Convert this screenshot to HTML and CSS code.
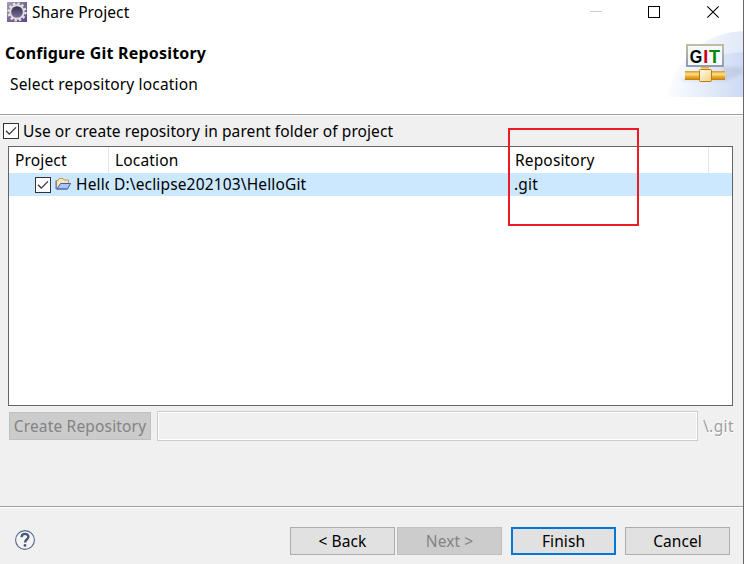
FILE: index.html
```html
<!DOCTYPE html>
<html lang="en">
<head>
<meta charset="utf-8">
<title>Share Project</title>
<link rel="stylesheet" href="styles.css">
</head>
<body>
<div class="window">
  <header class="header">
    <div class="titlebar">
      <svg class="app-icon" width="20" height="20" viewBox="0 0 20 20">
        <defs>
          <linearGradient id="tile" x1="0" y1="0" x2="1" y2="1"><stop offset="0" stop-color="#a9a0bd"/><stop offset=".5" stop-color="#75679a"/><stop offset="1" stop-color="#5d4787"/></linearGradient>
          <linearGradient id="core" x1="0" y1="0" x2="0" y2="1"><stop offset="0" stop-color="#302850"/><stop offset="1" stop-color="#82799c"/></linearGradient>
        </defs>
        <rect width="20" height="20" fill="url(#tile)"/>
        <circle cx="10" cy="10" r="8.5" fill="none" stroke="#e8e4dc" stroke-width="2.2" stroke-dasharray="2.4 2.05"/>
        <circle cx="10" cy="10" r="6.8" fill="url(#core)" stroke="#e4e0da" stroke-width="1.9"/>
      </svg>
      <span class="title">Share Project</span>
      <svg class="controls" width="130" height="24" viewBox="0 0 130 24" fill="none">
        <path d="M0 11.5H12" stroke="#ccc"/>
        <rect x="58.5" y="6.5" width="11" height="11" stroke="#000"/>
        <path d="M117.3 6.3L128.7 17.7M128.7 6.3L117.3 17.7" stroke="#000" stroke-width="1.1"/>
      </svg>
    </div>
    <div class="banner">
      <div class="banner-text">
        <h1>Configure Git Repository</h1>
        <p>Select repository location</p>
      </div>
      <svg class="git-logo" width="75" height="67" viewBox="0 0 75 67">
        <defs>
          <linearGradient id="glow" x1="0" y1=".5" x2="1" y2=".6"><stop offset="0" stop-color="#fafcff"/><stop offset=".55" stop-color="#eff3fc"/><stop offset="1" stop-color="#dfe8f8"/></linearGradient>
          <linearGradient id="frame" x1="0" y1="0" x2="0" y2="1"><stop offset="0" stop-color="#c2bda0"/><stop offset="1" stop-color="#929bb0"/></linearGradient>
          <linearGradient id="pipe" x1="0" y1="0" x2="0" y2="1"><stop offset="0" stop-color="#d99a22"/><stop offset=".35" stop-color="#ffe18a"/><stop offset=".6" stop-color="#eeb136"/><stop offset="1" stop-color="#c27c08"/></linearGradient>
          <linearGradient id="joint" x1="0" y1="0" x2="1" y2="1"><stop offset="0" stop-color="#fffdf2"/><stop offset="1" stop-color="#f3cf7a"/></linearGradient>
          <linearGradient id="shade"><stop offset="0" stop-color="#bcc3d3" stop-opacity=".3"/><stop offset="1" stop-color="#b5c0d8" stop-opacity=".6"/></linearGradient>
          <linearGradient id="inner"><stop offset="0" stop-color="#ccd9f3" stop-opacity="0"/><stop offset="1" stop-color="#c3d2f1" stop-opacity=".6"/></linearGradient>
          <filter id="soft"><feGaussianBlur stdDeviation="1.5"/></filter>
        </defs>
        <path d="M0 67C6 33 32 3 75 1V67Z" fill="url(#glow)"/>
        <path d="M16 41C26 30 50 24 75 22V67H8Z" fill="url(#inner)"/>
        <path d="M55 37H75V43L58 51H14V48H55Z" fill="url(#shade)" filter="url(#soft)"/>
        <rect x="19" y="15" width="36" height="21" fill="#f4fafb" stroke="url(#frame)" stroke-width="2"/>
        <g class="logo-text"><text x="21.8" y="32.5" textLength="12.5" lengthAdjust="spacingAndGlyphs" fill="#050505">G</text><text x="35.2" y="32.5" textLength="5" lengthAdjust="spacingAndGlyphs" fill="#c4001a">I</text><text x="41" y="32.5" textLength="11" lengthAdjust="spacingAndGlyphs" fill="#078607">T</text></g>
        <rect x="33" y="37" width="8" height="5" fill="url(#pipe)"/>
        <rect x="17" y="41" width="40" height="9" fill="url(#pipe)"/>
        <rect x="31.5" y="39.5" width="12" height="12" rx="1" fill="url(#joint)" stroke="#bd7b13"/>
      </svg>
    </div>
  </header>
  <main class="content">
    <label class="option">
      <svg class="check" width="16" height="16" viewBox="0 0 16 16"><rect x=".5" y=".5" width="15" height="15" fill="#fff" stroke="#333"/><path d="M3 7.8L6.3 11.1L13 4.4" fill="none" stroke="#333" stroke-width="1.3"/></svg>
      <span class="option-text">Use or create repository in parent folder of project</span>
    </label>
    <div class="table">
      <div class="row head">
        <div class="cell"><span class="t-project">Project</span></div>
        <div class="cell"><span class="t-location">Location</span></div>
        <div class="cell"><span class="t-repository">Repository</span></div>
      </div>
      <div class="row selected">
        <div class="cell name-cell">
          <svg class="check" width="16" height="16" viewBox="0 0 16 16"><rect x=".5" y=".5" width="15" height="15" fill="#fff" stroke="#333"/><path d="M3 7.8L6.3 11.1L13 4.4" fill="none" stroke="#333" stroke-width="1.3"/></svg>
          <svg class="folder" width="17" height="14" viewBox="0 0 17 14"><path d="M1.5 11.5V3.5H3L4 1.5H8L9 3H13.5V6" fill="#fbe6b4" stroke="#c59b58"/><path d="M2 12L5.5 6.5H15.5L12.5 12Z" fill="#a9c8f5" stroke="#465cae"/><path d="M1 3.5V12H12.5" fill="none" stroke="#5a68ae"/></svg>
          <span class="t-name">HelloGit</span>
        </div>
        <div class="cell"><span class="t-path">D:\eclipse202103\HelloGit</span></div>
        <div class="cell"><span class="t-git">.git</span></div>
      </div>
      <div class="highlight"></div>
    </div>
    <div class="create">
      <button class="btn create-btn" disabled><span class="t-create">Create Repository</span></button>
      <input class="path" disabled aria-label="Repository path">
      <span class="suffix">\.git</span>
    </div>
  </main>
  <footer class="footer">
    <svg class="help" width="22" height="22" viewBox="0 0 22 22"><circle cx="11" cy="11" r="9.4" fill="#f4f4f4" stroke="#53698f" stroke-width="1.1"/><path d="M7.6 8.2C7.7 3.7 14.6 4 14.4 8C14.3 10.4 11.1 10.3 11.1 13.5" fill="none" stroke="#465a80" stroke-width="2.4"/><circle cx="11" cy="16.4" r="1.4" fill="#465a80"/></svg>
    <button class="btn"><span class="t-back">&lt; Back</span></button>
    <button class="btn" disabled><span class="t-next">Next &gt;</span></button>
    <button class="btn primary"><span class="t-finish">Finish</span></button>
    <button class="btn"><span class="t-cancel">Cancel</span></button>
  </footer>
</div>
</body>
</html>
```
FILE: styles.css
```css
* { box-sizing: border-box; }
body { margin: 0; background: #fff; overflow: hidden; }
body, button, input { font: 15.5px/22px "Noto Sans", "Open Sans", sans-serif; color: #000; letter-spacing: .08px; }
svg { display: block; flex: none; }
span { white-space: pre; }
.window { width: 744px; height: 564px; display: flex; flex-direction: column; background: #f0f0f0; border-right: 1px solid #666; }
.header { height: 116px; background: #fff; border-bottom: 1px solid #fff; box-shadow: inset 0 -1px #a0a0a0; }
.titlebar { height: 30px; display: flex; align-items: flex-start; padding: 0 23px 0 7px; }
.app-icon { margin-top: 2px; }
.title { margin: 1px auto 0 5px; }
.banner { display: flex; justify-content: space-between; }
.banner-text { padding: 12px 0 0 5px; }
h1 { margin: 0; font-size: 16px; line-height: 22px; font-weight: 700; letter-spacing: .2px; }
.banner p { margin: 9px 0 0 5px; letter-spacing: .17px; }
.logo-text { font: 700 19px "Liberation Sans", sans-serif; letter-spacing: 0; }
.content { flex: 1; padding: 4px 9px 0 3px; }
.option { display: flex; height: 26px; }
.option .check { margin: 3px 4px 0 0; }
.table { position: relative; margin-left: 5px; width: 725px; height: 260px; border: 1px solid #646464; background: #fff; }
.row { display: grid; grid-template-columns: 100px 400px 200px; height: 23px; }
.head { height: 26px; }
.head .cell { border-right: 1px solid #e5e5e5; padding: 2px 0 0 6px; letter-spacing: .15px; }
.selected { background: #cce8ff; }
.selected .cell { padding-left: 5px; overflow: hidden; letter-spacing: .15px; }
.selected .name-cell { display: flex; padding-left: 26px; }
.name-cell .check { margin: 4px 4px 0 0; }
.folder { margin: 4px 4px 0 0; }
.highlight { position: absolute; left: 499px; top: -19px; width: 131px; height: 98px; border: 2px solid #ed1c24; }
.create { display: flex; margin: 5px 0 0 6px; height: 30px; }
.btn { width: 105px; height: 28px; padding: 0; border: 1px solid #adadad; background: #e1e1e1; border-radius: 0; }
.btn:disabled { border-color: #bfbfbf; background: #ccc; color: #838383; }
.create-btn { width: 142px; margin-top: 1px; letter-spacing: .17px; }
.path { width: 541px; height: 30px; margin-left: 6px; border: 1px solid #ccc; box-shadow: inset 0 0 0 1px #fff; background: #f0f0f0; padding: 0; }
.suffix { margin: 4px 0 0 5px; color: #a0a0a0; text-shadow: 1px 1px #fff; letter-spacing: .4px; }
.footer { height: 58px; border-top: 1px solid #a0a0a0; box-shadow: inset 0 1px #fff; display: flex; align-items: flex-start; padding: 20px 13px 0 14px; }
.help { margin: 2px auto 0 0; }
.footer .btn + .btn { margin-left: 2px; }
.footer .btn + .primary, .footer .primary + .btn { margin-left: 9px; }
.primary { border: 2px solid #0078d7; }
```
